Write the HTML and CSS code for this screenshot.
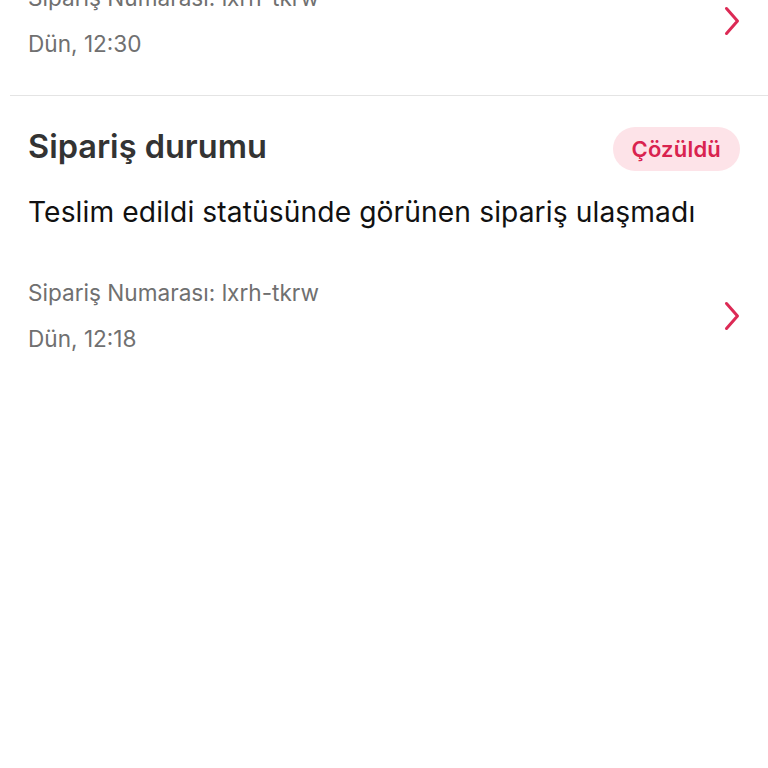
FILE: index.html
```html
<!DOCTYPE html>
<html lang="tr">
<head>
<meta charset="utf-8">
<link rel="stylesheet" href="styles.css">
</head>
<body>
<div class="list">
  <div class="card card-cut">
    <div class="meta-row">
      <div class="meta">
        <div class="meta-line">Sipariş Numarası: lxrh-tkrw</div>
        <div class="meta-line">Dün, 12:30</div>
      </div>
      <svg class="chev" viewBox="0 0 16 30" width="16" height="30"><path d="M2.5 2.5 L13.5 15 L2.5 27.5" fill="none" stroke="#dc2a55" stroke-width="3" stroke-linecap="round" stroke-linejoin="round"/></svg>
    </div>
  </div>
  <div class="card">
    <div class="title-row">
      <div class="title">Sipariş durumu</div>
      <div class="badge">Çözüldü</div>
    </div>
    <div class="desc">Teslim edildi statüsünde görünen sipariş ulaşmadı</div>
    <div class="meta-row meta-gap">
      <div class="meta">
        <div class="meta-line">Sipariş Numarası: lxrh-tkrw</div>
        <div class="meta-line">Dün, 12:18</div>
      </div>
      <svg class="chev" viewBox="0 0 16 30" width="16" height="30"><path d="M2.5 2.5 L13.5 15 L2.5 27.5" fill="none" stroke="#dc2a55" stroke-width="3" stroke-linecap="round" stroke-linejoin="round"/></svg>
    </div>
  </div>
</div>
</body>
</html>
```
FILE: styles.css
```css
html, body {
  margin: 0;
  padding: 0;
  background: #ffffff;
  font-family: Inter, "Noto Sans", sans-serif;
}
.list {
  margin-top: -15px;
}
.card {
  margin-left: 10px;
  padding: 31px 28px 38px 18px;
}
.card-cut {
  padding-top: 0;
  border-bottom: 1px solid #e4e4e4;
}
.title-row {
  display: flex;
  align-items: center;
  justify-content: space-between;
  height: 44px;
}
.title {
  font-size: 32.5px;
  font-weight: 600;
  color: #333333;
  margin-top: -6px;
}
.badge {
  height: 44px;
  padding: 0 19px;
  border-radius: 22px;
  background: #fde3e8;
  color: #d9234f;
  font-size: 22px;
  font-weight: 600;
  letter-spacing: 0.2px;
  display: flex;
  align-items: center;
}
.desc {
  margin-top: 24px;
  font-size: 28.2px;
  line-height: 34px;
  color: #111111;
  letter-spacing: 0.1px;
}
.meta-row {
  display: flex;
  align-items: center;
  justify-content: space-between;
}
.meta-gap {
  margin-top: 51px;
}
.meta {
  display: flex;
  flex-direction: column;
  gap: 20px;
}
.meta-line {
  font-size: 22.6px;
  line-height: 26px;
  color: #707070;
}
.chev {
  display: block;
}
```
